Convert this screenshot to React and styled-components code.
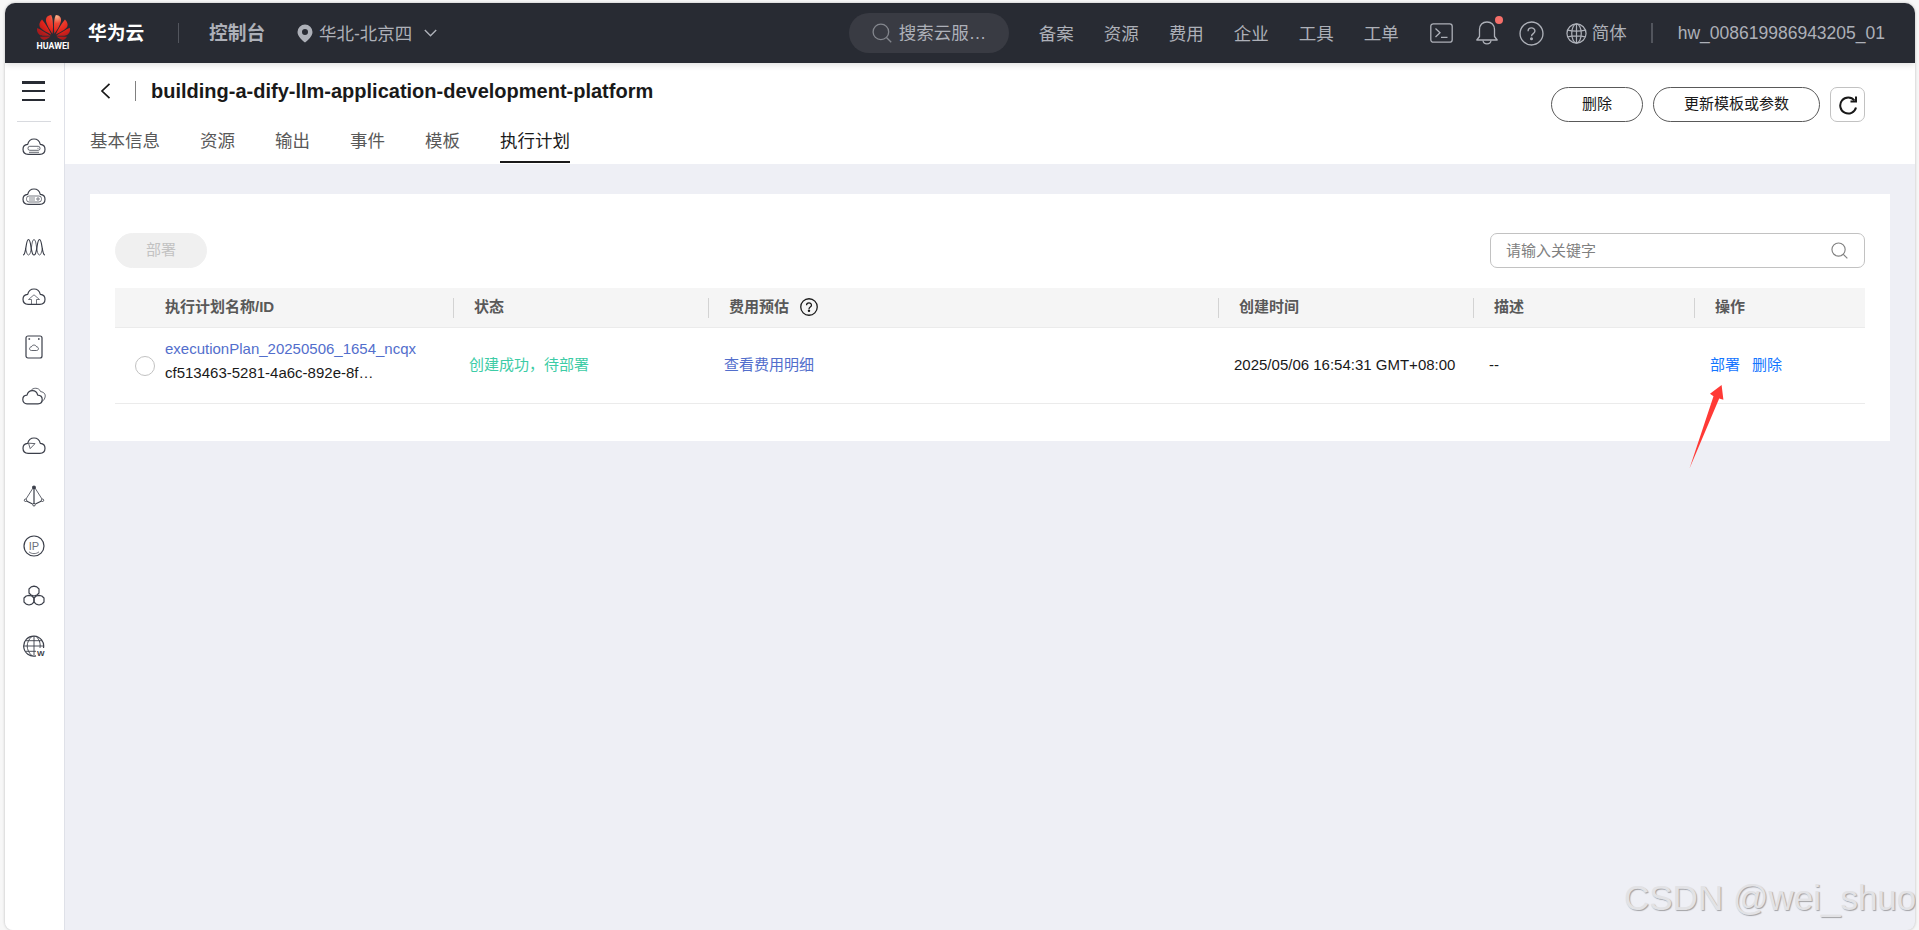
import styled, { createGlobalStyle, css } from "styled-components";
import { SiHuawei } from "react-icons/si";

const GlobalStyle = createGlobalStyle`
  * {
    box-sizing: border-box;
  }

  body {
    margin: 0;
    background: #f7f7f7;
    color: #191919;
    font-family: "Liberation Sans", "Noto Sans CJK SC", sans-serif;
    font-size: 15px;
    overflow: hidden;
  }
`;

const Page = styled.div`
  height: 930px;
  padding: 3px 4px 0 5px;
  display: flex;
  flex-direction: column;
  position: relative;
`;

const Window = styled.div`
  flex: 1;
  display: flex;
  flex-direction: column;
  border-radius: 10px 10px 8px 8px;
  overflow: hidden;
  background: #eeeff5;
  box-shadow: 0 0 3px rgba(0, 0, 0, 0.25);
`;

const TopBar = styled.header`
  height: 60px;
  flex: none;
  display: flex;
  align-items: center;
  background: #282b33;
  color: #adb0b8;
  font-size: 17.5px;
  line-height: 24px;
  padding: 0 30px 0 32px;
  white-space: nowrap;
  box-shadow: 0 2px 6px rgba(0, 0, 0, 0.12);
  z-index: 1;
`;

const Logo = styled.div`
  width: 32px;
  height: 36px;
  display: flex;
  flex-direction: column;
  align-items: center;
  font-family: Roboto, "Liberation Sans", sans-serif;
  font-size: 8.8px;
  font-weight: 700;
  line-height: 8px;
  color: #fff;
`;

const Petals = styled(SiHuawei)`
  width: 33px;
  height: 33px;
  margin: -4px 0 -2px;
  flex: none;
`;

const GradientDefs = styled.svg`
  width: 0;
  height: 0;
  flex: none;
`;

const Brand = styled.span`
  margin-left: 19px;
  width: 90px;
  padding-top: 1px;
  color: #fff;
  font-size: 18.75px;
  font-weight: 700;
`;

const Divider = styled.span`
  width: ${(p) => p.$width || 1}px;
  height: 20px;
  flex: none;
  background: ${(p) => p.$color || "#52555d"};
`;

const Console = styled.span`
  margin-left: 30px;
  width: 88px;
  padding-top: 1px;
  font-size: 18.75px;
  font-weight: 700;
`;

const Region = styled.div`
  display: flex;
  align-items: center;

  span {
    margin: 0 12px 0 6px;
    padding-top: 1px;
  }
`;

const Search = styled.div`
  margin-left: auto;
  width: 160px;
  height: 40px;
  border-radius: 20px;
  background: #393b43;
  display: flex;
  align-items: center;
  padding-left: 23px;
  gap: 7px;
`;

const Nav = styled.nav`
  display: flex;
  gap: 30px;
  margin-left: 30px;
  padding-top: 1px;
`;

const Tools = styled.div`
  display: flex;
  align-items: center;
  margin-left: 31px;

  svg {
    display: block;
  }
`;

const Bell = styled.div`
  position: relative;
  margin: 0 21px 0 23px;

  &::after {
    content: "";
    position: absolute;
    top: -5px;
    right: -5px;
    width: 8px;
    height: 8px;
    border-radius: 50%;
    background: #f66f6a;
  }
`;

const Lang = styled.div`
  display: flex;
  align-items: center;
  gap: 5px;
  margin: 0 24px 0 22px;
`;

const User = styled.span`
  margin-left: 25px;
`;

const Body = styled.div`
  flex: 1;
  display: flex;
`;

const Sidebar = styled.aside`
  width: 60px;
  background: #fff;
  border-right: 1px solid #dfe1e8;
  padding-top: 18px;
  padding-right: 1px;
  display: flex;
  flex-direction: column;
  align-items: center;
`;

const MenuButton = styled.div`
  width: 23px;
  height: 20px;
  margin-right: 1px;
  display: flex;
  flex-direction: column;
  justify-content: space-between;

  i {
    height: 2.5px;
    background: #282b33;
  }
`;

const SideLine = styled.div`
  width: 34px;
  height: 1px;
  margin: 20px 0 0;
  background: #d8dadf;
`;

const SideItem = styled.div`
  height: 49.9px;
  display: flex;
  align-items: center;

  svg {
    display: block;
  }
`;

const Main = styled.main`
  flex: 1;
  display: flex;
  flex-direction: column;
`;

const PageHead = styled.div`
  height: 100.5px;
  background: #fff;
  display: flex;
  justify-content: space-between;
  padding: 0 50px 0 25px;
`;

const TitleRow = styled.div`
  display: flex;
  align-items: center;
  height: 20px;
  margin-top: 18px;
  padding-left: 10px;

  h1 {
    margin: 0 0 0 15px;
    font-size: 20px;
    font-weight: 700;
    line-height: 24px;
    white-space: nowrap;
  }

  svg {
    margin-right: 24px;
  }
`;

const Tabs = styled.div`
  display: flex;
  gap: 40px;
  margin-top: 17px;
`;

const Tab = styled.div`
  height: 45px;
  padding-top: 11px;
  font-size: 17.5px;
  line-height: 24px;
  color: #595959;

  ${(p) =>
    p.$active &&
    css`
      color: #191919;
      border-bottom: 2px solid #191919;
    `}
`;

const Actions = styled.div`
  display: flex;
  gap: 10px;
  margin-top: 24px;
`;

const Button = styled.button`
  height: 35px;
  padding: 0 0 2px;
  width: ${(p) => p.$width}px;
  border: 1px solid #595959;
  border-radius: 18px;
  background: #fff;
  color: #191919;
  font: inherit;
  line-height: 20px;

  &:disabled {
    border-color: #f0f0f0;
    background: #f0f0f0;
    color: #c2c2c2;
  }
`;

const IconButton = styled.button`
  width: 35px;
  height: 35px;
  padding: 0;
  border: 1px solid #c2c2c2;
  border-radius: 7px;
  background: #fff;
  display: flex;
  align-items: center;
  justify-content: center;
`;

const Card = styled.section`
  margin: 30.5px 25px 0;
  height: 247px;
  padding: 39px 25px 0;
  background: #fff;
`;

const Toolbar = styled.div`
  display: flex;
  justify-content: space-between;
`;

const Filter = styled.div`
  width: 375px;
  height: 35px;
  border: 1px solid #c2c2c2;
  border-radius: 7px;
  display: flex;
  align-items: center;
  justify-content: space-between;
  padding: 0 16px 0 15px;
  color: #808080;
  line-height: 20px;
`;

const Row = styled.div`
  display: grid;
  grid-template-columns: 338px 255px 510px 255px 221px 1fr;
  align-items: center;
  border-bottom: 1px solid #ebebeb;
`;

const HeadRow = styled(Row)`
  margin-top: 20px;
  height: 40px;
  background: #f5f5f5;
  color: #595959;
  font-weight: 700;
`;

const HeadCell = styled.div`
  height: 20px;
  padding-bottom: 2px;
  line-height: 18px;
  display: flex;
  align-items: center;
  gap: 11px;
  padding-left: 20px;
  border-left: 1px solid #d3d3d3;

  &:first-child {
    padding-left: 50px;
    border-left: none;
  }
`;

const BodyRow = styled(Row)`
  height: 76px;
  padding-bottom: 2px;
`;

const Cell = styled.div`
  display: flex;
  align-items: center;
  gap: 12px;
  padding-left: 16px;
  line-height: 24px;
  white-space: nowrap;
  color: ${(p) => p.$color || "#191919"};

  &:first-child {
    padding-left: 20px;
    gap: 10px;
  }
`;

const Radio = styled.span`
  width: 20px;
  height: 20px;
  margin-top: 3px;
  border: 1px solid #c2c2c2;
  border-radius: 50%;
`;

const PlanName = styled.div`
  color: #526ecc;
`;

const PlanInfo = styled.div`
  margin-top: -7px;
`;

const Arrow = styled.svg`
  position: absolute;
  left: 1687px;
  top: 384px;
`;

const Watermark = styled.div`
  position: absolute;
  left: 1624px;
  top: 876px;
  width: 292px;
  overflow: hidden;
  font-size: 35px;
  line-height: 44px;
  white-space: nowrap;
  color: #e2e2e5;
  text-shadow: 1px 1px 1px #a2a2a6;
`;

const CLOUD =
  "M6.2 16.3 C3 16.3 1 14.2 1 11.3 C1 8.4 3 6.5 5.7 6.3 C6.5 2.9 9 1 12 1 C15 1 17.5 2.9 18.3 6.3 C21 6.5 23 8.4 23 11.3 C23 14.2 21 16.3 17.8 16.3 Z";

const SideIcon = ({ children, h = 18 }) => (
  <svg
    width="24"
    height={h}
    viewBox={`0 0 24 ${h}`}
    fill="none"
    stroke="#3b3f4a"
    strokeWidth="1.2"
    strokeLinejoin="round"
  >
    {children}
  </svg>
);

const sideIcons = [
  <SideIcon>
    <path d={CLOUD} />
    <rect x="6" y="8.3" width="12" height="4" rx="1.8" strokeWidth="0.8" />
    <path d="M15.5 10.3h1M7 14.3h10" strokeWidth="0.8" />
  </SideIcon>,
  <SideIcon>
    <path d={CLOUD} />
    <rect x="4.5" y="8" width="15" height="6" rx="2.6" strokeWidth="0.7" />
    <path d="M7 10h6M7 12h6" strokeWidth="0.6" />
    <circle cx="16" cy="11" r="1.2" strokeWidth="0.7" />
  </SideIcon>,
  <SideIcon>
    <path d="M1 17C4.5 17 3.5 1.5 6.5 1.5S8.5 17 12 17S14.5 1.5 17.5 1.5S19.5 17 23 17" />
    <path
      d="M3.5 10C4.5 14 5 17 6.5 17C10 17 9 1.5 12 1.5S14 17 17.5 17C19 17 19.5 14 20.5 10"
      strokeWidth="0.8"
    />
  </SideIcon>,
  <SideIcon>
    <path d={CLOUD} />
    <path d="M9.5 16v-4.5H6.5L12 6.8l5.5 4.7h-3V16" strokeWidth="0.7" />
  </SideIcon>,
  <SideIcon h={24}>
    <rect x="4" y="1" width="16" height="22" rx="2" />
    <path d="M6.5 4h1.6M16 4h1.6" strokeWidth="1.5" />
    <path
      d="M9.5 15.5C7 15.5 6.8 12 9.5 11.8C10 9.5 14 9.5 14.5 11.8C17.2 12 17 15.5 14.5 15.5Z"
      strokeWidth="0.8"
    />
  </SideIcon>,
  <SideIcon>
    <path
      d="M9 3.5C10.5 .7 17 0 18.6 4.6C22.8 5.2 24 8 22.8 11C22 13.2 21 14 19.5 14.3"
      strokeWidth="0.8"
    />
    <path d="M5 16.8C2.5 16.8.8 15 .8 12.5C.8 10 2.6 8.3 5 8.2C5.8 5 8 3.6 10.5 3.6C13 3.6 15 5.2 15.7 8.2C18.5 8.3 20.2 10 20.2 12.5C20.2 15 18.5 16.8 16 16.8Z" />
  </SideIcon>,
  <SideIcon>
    <path d={CLOUD} />
    <path d="M6.5 6.2L13 6.6L8.2 11.6Z" strokeWidth="0.8" />
  </SideIcon>,
  <SideIcon h={22}>
    <path d="M11 3L4 14M13 3L20 14" strokeWidth="0.8" />
    <path d="M12 3V18.5M4.5 16L10.6 19M19.5 16L13.4 19" />
    <circle cx="12" cy="2.3" r="1.3" fill="#3b3f4a" />
    <circle cx="3.5" cy="15.3" r="1.2" strokeWidth="0.9" />
    <circle cx="20.5" cy="15.3" r="1.2" strokeWidth="0.9" />
    <circle cx="12" cy="19.7" r="1.3" strokeWidth="0.9" />
  </SideIcon>,
  <SideIcon h={22}>
    <circle cx="12" cy="11" r="10" />
    <text
      x="12"
      y="14.5"
      textAnchor="middle"
      fontSize="11"
      fill="#6d7079"
      stroke="none"
    >
      IP
    </text>
    <path d="M7 16.8C9.5 19.2 14.5 19.2 17 16.8" strokeWidth="0.7" />
  </SideIcon>,
  <SideIcon h={22}>
    <path d="M12 1.2L14.8 1.9L17 4V8L14.8 10.2L12 11L9.2 10.2L7 8V4L9.2 1.9Z" />
    <path d="M7 10.3L9.8 11L12 13V17L9.8 19.2L7 20L4.2 19.2L2 17V13L4.2 11Z" />
    <path d="M17 10.3L19.8 11L22 13V17L19.8 19.2L17 20L14.2 19.2L12 17V13L14.2 11Z" />
  </SideIcon>,
  <SideIcon h={22}>
    <path d="M21.5 13A10 10 0 1 0 14 20.8" />
    <path d="M12 1V20M2 11H22M4 5.7H20M4 16.3H14" strokeWidth="0.9" />
    <path d="M10 1.3C3.6 7 3.6 15 10 20.7M14 1.3C18 5 18.5 9 18 13" strokeWidth="0.9" />
    <text x="15" y="21" fontSize="8" fontWeight="700" fill="#3b3f4a" stroke="none">
      W
    </text>
  </SideIcon>,
];

const SearchIcon = ({ size, color }) => (
  <svg width={size} height={size} viewBox="0 0 18 18" fill="none" stroke={color} strokeWidth="1.2">
    <circle cx="8" cy="8" r="7" />
    <path d="M13 13l4.3 4.3" />
  </svg>
);

const HelpIcon = ({ size, color, width }) => (
  <svg width={size} height={size} viewBox="0 0 24 24" fill="none" stroke={color} strokeWidth={width}>
    <circle cx="12" cy="12" r="11" />
    <path d="M8.7 9.8C8.7 5.6 15.3 5.6 15.3 9.7C15.3 12.2 12 12 12 14.7" />
    <circle cx="12" cy="17" r="0.8" />
  </svg>
);

const navItems = ["备案", "资源", "费用", "企业", "工具", "工单"];
const tabs = ["基本信息", "资源", "输出", "事件", "模板", "执行计划"];

const Header = () => (
  <TopBar>
    <GradientDefs>
      <radialGradient id="petal" gradientUnits="userSpaceOnUse" cx="14.5" cy="4" r="17">
        <stop offset="0" stopColor="#f9b48c" />
        <stop offset="0.3" stopColor="#ee4534" />
        <stop offset="0.65" stopColor="#e2231a" />
        <stop offset="1" stopColor="#a81a1c" />
      </radialGradient>
    </GradientDefs>
    <Logo>
      <Petals fill="url(#petal)" />
      HUAWEI
    </Logo>
    <Brand>华为云</Brand>
    <Divider />
    <Console>控制台</Console>
    <Region>
      <svg width="16" height="19" viewBox="0 0 16 19" fill="#adb0b8">
        <path
          fillRule="evenodd"
          d="M8 .5A7.5 7.5 0 0 0 .5 8C.5 12.5 5.5 16.5 8 18.5C10.5 16.5 15.5 12.5 15.5 8A7.5 7.5 0 0 0 8 .5ZM8 5A3 3 0 1 1 8 11A3 3 0 0 1 8 5Z"
        />
      </svg>
      <span>华北-北京四</span>
      <svg width="13" height="8" viewBox="0 0 13 8" fill="none" stroke="#adb0b8" strokeWidth="1.4">
        <path d="M.8 1L6.5 6.8L12.2 1" />
      </svg>
    </Region>
    <Search>
      <SearchIcon size={20} color="#83868d" />
      搜索云服…
    </Search>
    <Nav>
      {navItems.map((item) => (
        <span key={item}>{item}</span>
      ))}
    </Nav>
    <Tools>
      <svg width="23" height="20" viewBox="0 0 23 20" fill="none" stroke="#adb0b8" strokeWidth="1.3">
        <rect x=".8" y=".8" width="21.4" height="18.4" rx="2.5" />
        <path d="M5.5 5.5L10 9.7L5.5 14M11 14.3H17.5" />
      </svg>
      <Bell>
        <svg width="22" height="24" viewBox="0 0 22 24" fill="none" stroke="#adb0b8" strokeWidth="1.3">
          <path
            d="M.8 19H21.2L18.5 15.5V8.5C18.5 4 15.5 1 11 1S3.5 4 3.5 8.5V15.5L.8 19Z"
            strokeLinejoin="round"
          />
          <path d="M7 19.5C7.5 24 14.5 24 15 19.5" />
        </svg>
      </Bell>
      <HelpIcon size={25} color="#adb0b8" width={1.3} />
      <Lang>
        <svg width="21" height="21" viewBox="0 0 22 22" fill="none" stroke="#adb0b8" strokeWidth="1.3">
          <circle cx="11" cy="11" r="10" />
          <ellipse cx="11" cy="11" rx="5" ry="10" />
          <path d="M11 1V21M2 7.5C6 9 16 9 20 7.5M2 14.5C6 13 16 13 20 14.5" />
        </svg>
        简体
      </Lang>
    </Tools>
    <Divider $width={2} />
    <User>hw_008619986943205_01</User>
  </TopBar>
);

const App = () => (
  <>
    <GlobalStyle />
    <Page>
      <Window>
        <Header />
        <Body>
          <Sidebar>
            <MenuButton>
              <i />
              <i />
              <i />
            </MenuButton>
            <SideLine />
            {sideIcons.map((icon, i) => (
              <SideItem key={i}>{icon}</SideItem>
            ))}
          </Sidebar>
          <Main>
            <PageHead>
              <div>
                <TitleRow>
                  <svg width="11" height="16" viewBox="0 0 11 16" fill="none" stroke="#191919" strokeWidth="1.7">
                    <path d="M9.5 .8L2 8L9.5 15.2" />
                  </svg>
                  <Divider $color="#808080" />
                  <h1>building-a-dify-llm-application-development-platform</h1>
                </TitleRow>
                <Tabs>
                  {tabs.map((tab) => (
                    <Tab key={tab} $active={tab === "执行计划"}>
                      {tab}
                    </Tab>
                  ))}
                </Tabs>
              </div>
              <Actions>
                <Button $width={92}>删除</Button>
                <Button $width={167}>更新模板或参数</Button>
                <IconButton>
                  <svg width="20" height="20" viewBox="0 0 20 20" fill="none" stroke="#191919" strokeWidth="2">
                    <path d="M16.5 5.5A8 8 0 1 0 18 12.5" />
                    <path d="M18 1.5V6.5H12.5" />
                  </svg>
                </IconButton>
              </Actions>
            </PageHead>
            <Card>
              <Toolbar>
                <Button $width={92} disabled>
                  部署
                </Button>
                <Filter>
                  请输入关键字
                  <SearchIcon size={17} color="#808080" />
                </Filter>
              </Toolbar>
              <HeadRow>
                <HeadCell>执行计划名称/ID</HeadCell>
                <HeadCell>状态</HeadCell>
                <HeadCell>
                  费用预估
                  <HelpIcon size={18} color="#191919" width={1.7} />
                </HeadCell>
                <HeadCell>创建时间</HeadCell>
                <HeadCell>描述</HeadCell>
                <HeadCell>操作</HeadCell>
              </HeadRow>
              <BodyRow>
                <Cell>
                  <Radio />
                  <PlanInfo>
                    <PlanName>executionPlan_20250506_1654_ncqx</PlanName>
                    <div>cf513463-5281-4a6c-892e-8f…</div>
                  </PlanInfo>
                </Cell>
                <Cell $color="#3dcca6">创建成功，待部署</Cell>
                <Cell $color="#526ecc">查看费用明细</Cell>
                <Cell>2025/05/06 16:54:31 GMT+08:00</Cell>
                <Cell>--</Cell>
                <Cell $color="#1476ff">
                  <span>部署</span>
                  <span>删除</span>
                </Cell>
              </BodyRow>
            </Card>
          </Main>
        </Body>
      </Window>
      <Arrow width="37" height="86" viewBox="0 0 37 86" fill="#ff3a36">
        <path d="M34.6 1L36.4 15.7L32.2 14.5L2.5 84.5L26.5 12.2L23 9.7Z" />
      </Arrow>
      <Watermark>CSDN @wei_shuo</Watermark>
    </Page>
  </>
);

export default App;
